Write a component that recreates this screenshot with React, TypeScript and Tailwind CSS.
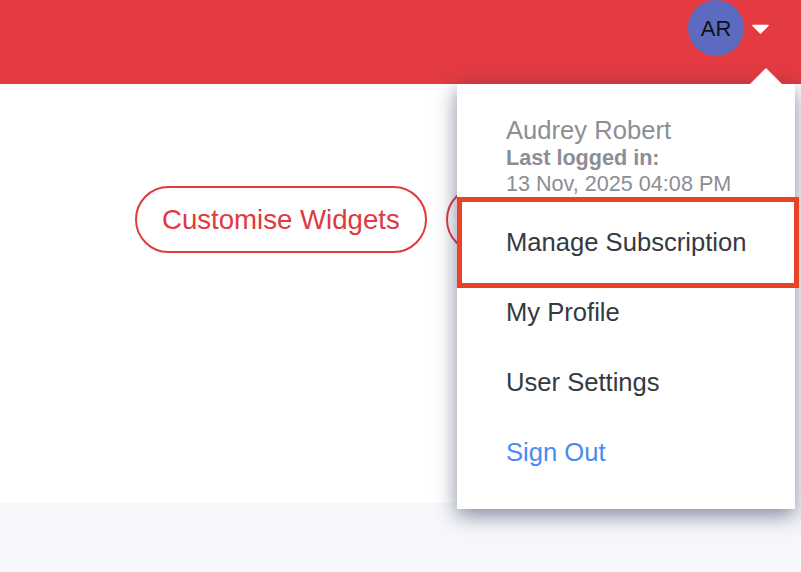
import { ReactNode } from 'react'

function MenuItem({ children, active, tone = 'default' }: { children: ReactNode; active?: boolean; tone?: 'default' | 'link' }) {
  return (
    <div className="relative flex h-[70px] items-center pl-[49px]">
      <span
        className={
          tone === 'link'
            ? 'text-[25.6px] leading-[70px] text-[#4a8af4]'
            : 'text-[25.6px] leading-[70px] text-[#343a40]'
        }
      >
        {children}
      </span>
      {/* highlight annotation */}
      {active && (
        <div className="pointer-events-none absolute -top-[10px] -bottom-[11px] left-0 -right-[4px] border-[5px] border-[#e84327]" />
      )}
    </div>
  )
}

export default function App() {
  return (
    <div className="relative min-h-screen w-full bg-[#f7f8fb] font-['Liberation_Sans',Arial,sans-serif]">
      {/* Top bar */}
      <header className="flex h-[84px] items-start justify-end bg-[#e33b41] pr-[32px]">
        <div className="flex items-center gap-[8px]">
          <div className="flex h-[56px] w-[56px] items-center justify-center rounded-full bg-[#5c6bc0] text-[22px] text-[#111]">
            AR
          </div>
          <svg width="17" height="10" viewBox="0 0 17 10" className="mt-[1px]">
            <path d="M1 1.5 H16 L8.5 9 Z" fill="#fff" stroke="#fff" strokeWidth="1.5" strokeLinejoin="round" />
          </svg>
        </div>
      </header>

      {/* Page content */}
      <main className="flex h-[419px] gap-[19px] overflow-hidden bg-white pl-[135px] pt-[102px]">
        <button className="h-[67px] shrink-0 rounded-full border-2 border-[#e0393e] px-[25px] text-[27.6px] text-[#e0393e]">
          Customise Widgets
        </button>
        {/* second action, hidden under the dropdown */}
        <button aria-label="Add Widget" className="h-[67px] w-[240px] shrink-0 rounded-full border-2 border-[#e0393e]" />
      </main>

      {/* User dropdown */}
      <div className="absolute left-[457px] top-[84px] w-[338px] bg-white pb-[22px] shadow-[0_6px_20px_rgba(45,55,90,0.6)]">
        <div className="absolute -top-[16px] right-[13px] h-0 w-0 border-x-[16px] border-b-[16px] border-x-transparent border-b-white" />
        <div className="px-[49px] pb-[10px] pt-[32px] text-[#8b8e94]">
          <div className="text-[25.6px] leading-[29px]">Audrey Robert</div>
          <div className="text-[21.6px] font-bold leading-[26px]">Last logged in:</div>
          <div className="text-[21.6px] leading-[26px]">13 Nov, 2025 04:08 PM</div>
        </div>
        <MenuItem active>Manage Subscription</MenuItem>
        <MenuItem>My Profile</MenuItem>
        <MenuItem>User Settings</MenuItem>
        <MenuItem tone="link">Sign Out</MenuItem>
      </div>
    </div>
  )
}
